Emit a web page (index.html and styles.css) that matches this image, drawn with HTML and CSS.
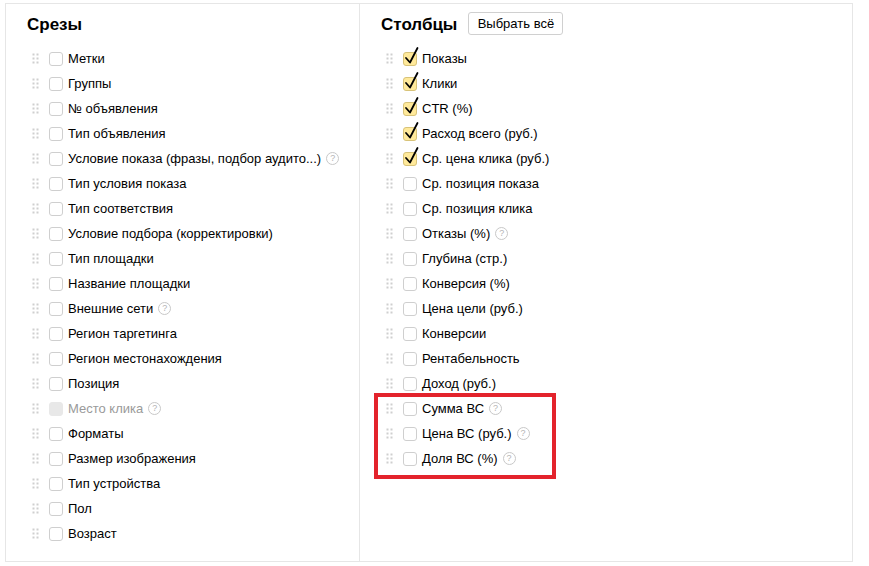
FILE: index.html
```html
<!DOCTYPE html>
<html lang="ru">
<head>
<meta charset="utf-8">
<link rel="stylesheet" href="styles.css">
</head>
<body>
<div class="panel">
  <section class="col col-left">
    <div class="head"><h2>Срезы</h2></div>
    <ul class="list">
      <li class="row"><span class="drag"></span><span class="cb"></span><span class="lbl">Метки</span></li>
      <li class="row"><span class="drag"></span><span class="cb"></span><span class="lbl">Группы</span></li>
      <li class="row"><span class="drag"></span><span class="cb"></span><span class="lbl">№ объявления</span></li>
      <li class="row"><span class="drag"></span><span class="cb"></span><span class="lbl">Тип объявления</span></li>
      <li class="row"><span class="drag"></span><span class="cb"></span><span class="lbl">Условие показа (фразы, подбор аудито...)</span><span class="help">?</span></li>
      <li class="row"><span class="drag"></span><span class="cb"></span><span class="lbl">Тип условия показа</span></li>
      <li class="row"><span class="drag"></span><span class="cb"></span><span class="lbl">Тип соответствия</span></li>
      <li class="row"><span class="drag"></span><span class="cb"></span><span class="lbl">Условие подбора (корректировки)</span></li>
      <li class="row"><span class="drag"></span><span class="cb"></span><span class="lbl">Тип площадки</span></li>
      <li class="row"><span class="drag"></span><span class="cb"></span><span class="lbl">Название площадки</span></li>
      <li class="row"><span class="drag"></span><span class="cb"></span><span class="lbl">Внешние сети</span><span class="help">?</span></li>
      <li class="row"><span class="drag"></span><span class="cb"></span><span class="lbl">Регион таргетинга</span></li>
      <li class="row"><span class="drag"></span><span class="cb"></span><span class="lbl">Регион местонахождения</span></li>
      <li class="row"><span class="drag"></span><span class="cb"></span><span class="lbl">Позиция</span></li>
      <li class="row disabled"><span class="drag"></span><span class="cb"></span><span class="lbl">Место клика</span><span class="help">?</span></li>
      <li class="row"><span class="drag"></span><span class="cb"></span><span class="lbl">Форматы</span></li>
      <li class="row"><span class="drag"></span><span class="cb"></span><span class="lbl">Размер изображения</span></li>
      <li class="row"><span class="drag"></span><span class="cb"></span><span class="lbl">Тип устройства</span></li>
      <li class="row"><span class="drag"></span><span class="cb"></span><span class="lbl">Пол</span></li>
      <li class="row"><span class="drag"></span><span class="cb"></span><span class="lbl">Возраст</span></li>
    </ul>
  </section>
  <section class="col col-right">
    <div class="head"><h2>Столбцы</h2><button class="btn" type="button">Выбрать всё</button></div>
    <ul class="list">
      <li class="row"><span class="drag"></span><span class="cb checked"><svg viewBox="0 0 16 20" width="16" height="20"><path d="M3 12 L7 16.5 L14.5 2" fill="none" stroke="#000" stroke-width="1.8" stroke-linecap="round" stroke-linejoin="round"/></svg></span><span class="lbl">Показы</span></li>
      <li class="row"><span class="drag"></span><span class="cb checked"><svg viewBox="0 0 16 20" width="16" height="20"><path d="M3 12 L7 16.5 L14.5 2" fill="none" stroke="#000" stroke-width="1.8" stroke-linecap="round" stroke-linejoin="round"/></svg></span><span class="lbl">Клики</span></li>
      <li class="row"><span class="drag"></span><span class="cb checked"><svg viewBox="0 0 16 20" width="16" height="20"><path d="M3 12 L7 16.5 L14.5 2" fill="none" stroke="#000" stroke-width="1.8" stroke-linecap="round" stroke-linejoin="round"/></svg></span><span class="lbl">CTR (%)</span></li>
      <li class="row"><span class="drag"></span><span class="cb checked"><svg viewBox="0 0 16 20" width="16" height="20"><path d="M3 12 L7 16.5 L14.5 2" fill="none" stroke="#000" stroke-width="1.8" stroke-linecap="round" stroke-linejoin="round"/></svg></span><span class="lbl">Расход всего (руб.)</span></li>
      <li class="row"><span class="drag"></span><span class="cb checked"><svg viewBox="0 0 16 20" width="16" height="20"><path d="M3 12 L7 16.5 L14.5 2" fill="none" stroke="#000" stroke-width="1.8" stroke-linecap="round" stroke-linejoin="round"/></svg></span><span class="lbl">Ср. цена клика (руб.)</span></li>
      <li class="row"><span class="drag"></span><span class="cb"></span><span class="lbl">Ср. позиция показа</span></li>
      <li class="row"><span class="drag"></span><span class="cb"></span><span class="lbl">Ср. позиция клика</span></li>
      <li class="row"><span class="drag"></span><span class="cb"></span><span class="lbl">Отказы (%)</span><span class="help">?</span></li>
      <li class="row"><span class="drag"></span><span class="cb"></span><span class="lbl">Глубина (стр.)</span></li>
      <li class="row"><span class="drag"></span><span class="cb"></span><span class="lbl">Конверсия (%)</span></li>
      <li class="row"><span class="drag"></span><span class="cb"></span><span class="lbl">Цена цели (руб.)</span></li>
      <li class="row"><span class="drag"></span><span class="cb"></span><span class="lbl">Конверсии</span></li>
      <li class="row"><span class="drag"></span><span class="cb"></span><span class="lbl">Рентабельность</span></li>
      <li class="row"><span class="drag"></span><span class="cb"></span><span class="lbl">Доход (руб.)</span></li>
      <li class="row"><span class="drag"></span><span class="cb"></span><span class="lbl">Сумма ВС</span><span class="help">?</span></li>
      <li class="row"><span class="drag"></span><span class="cb"></span><span class="lbl">Цена ВС (руб.)</span><span class="help">?</span></li>
      <li class="row"><span class="drag"></span><span class="cb"></span><span class="lbl">Доля ВС (%)</span><span class="help">?</span></li>
    </ul>
    <div class="highlight"></div>
  </section>
</div>
</body>
</html>
```

FILE: styles.css
```css
* { box-sizing: border-box; }
html, body { margin: 0; padding: 0; background: #fff; }
body {
  font-family: "Liberation Sans", Arial, sans-serif;
  font-size: 13px;
  color: #000;
}
.panel {
  margin: 3px 0 0 5px;
  width: 848px;
  height: 559px;
  border: 1px solid #e6e6e6;
  display: grid;
  grid-template-columns: 354px 1fr;
  position: relative;
}
.col {
  padding: 8px 0 0 21px;
  position: relative;
}
.col-left { border-right: 1px solid #e6e6e6; }
.head {
  display: flex;
  align-items: center;
  height: 26px;
  margin-bottom: 8px;
}
h2 {
  margin: 0;
  font-size: 17px;
  font-weight: bold;
  line-height: 26px;
}
.btn {
  margin-left: 11px;
  margin-top: -3px;
  height: 23px;
  width: 95px;
  padding: 0;
  border: 1px solid #d0d0d0;
  border-radius: 3px;
  background: #fff;
  font-family: inherit;
  font-size: 13px;
  color: #000;
}
.list { list-style: none; margin: 0; padding: 0 0 0 5px; }
.row {
  display: flex;
  align-items: center;
  height: 25px;
}
.drag {
  width: 7px;
  height: 11px;
  background-image: radial-gradient(circle, #cfcfcf 1.1px, transparent 1.3px);
  background-size: 4px 4px;
  background-position: -0.5px -0.5px;
  flex: none;
}
.cb {
  position: relative;
  width: 14px;
  height: 14px;
  margin-left: 10px;
  margin-right: 5px;
  border: 1px solid #cfcfcf;
  border-radius: 3px;
  background: #fff;
  flex: none;
}
.cb.checked {
  background: #ffe99a;
  border-color: #d8c379;
}
.cb svg {
  position: absolute;
  left: -1px;
  top: -7px;
}
.lbl { white-space: nowrap; }
.help {
  width: 13px;
  height: 13px;
  margin-left: 5px;
  border: 1px solid #c8c8c8;
  border-radius: 50%;
  color: #b5b5b5;
  font-size: 9px;
  line-height: 11px;
  text-align: center;
  flex: none;
}
.disabled .lbl { color: #9a9a9a; }
.disabled .cb { background: #e8e8e8; border-color: #e8e8e8; }
.highlight {
  position: absolute;
  left: 14px;
  top: 389px;
  width: 182px;
  height: 86px;
  border: 4px solid #e3232c;
  pointer-events: none;
}
```
